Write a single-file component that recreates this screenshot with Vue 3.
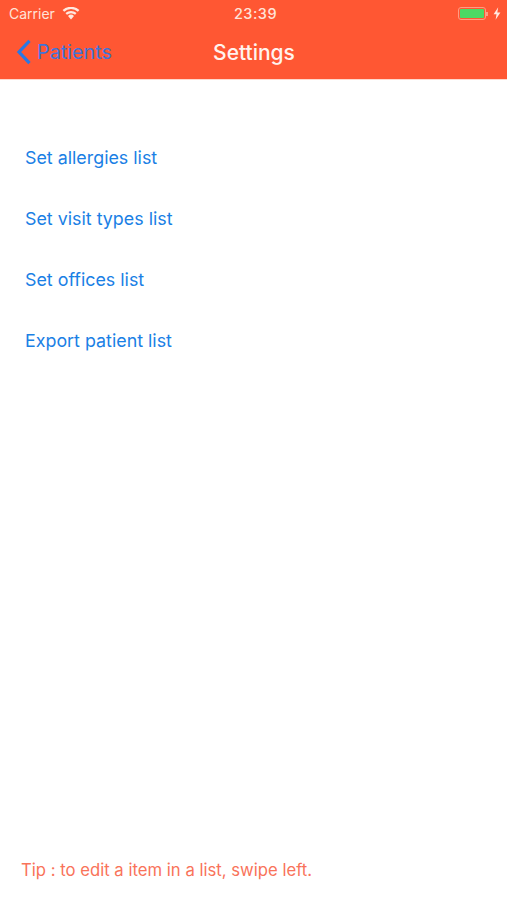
<script setup>
const items = ['Set allergies list', 'Set visit types list', 'Set offices list', 'Export patient list']
</script>

<template>
  <div class="screen">
    <header class="top">
      <div class="status">
        <div class="status-left">
          <span class="carrier">Carrier</span>
          <svg class="wifi" width="18" height="13" viewBox="0 0 18 13">
            <path d="M9 12.4 L6 9 A4.4 4.4 0 0 1 12 9 Z" fill="#ffe9e0"/>
            <path d="M4.2 6.9 A7.2 7.2 0 0 1 13.8 6.9" fill="none" stroke="#ffe9e0" stroke-width="2.3"/>
            <path d="M1.4 3.9 A11.2 11.2 0 0 1 16.6 3.9" fill="none" stroke="#ffe9e0" stroke-width="2.3"/>
          </svg>
        </div>
        <span class="time">23:39</span>
        <div class="status-right">
          <span class="battery"><span class="level"></span></span>
          <span class="nub"></span>
          <svg class="bolt" width="8" height="13" viewBox="0 0 8 13">
            <path d="M5.2 0.3 L0.6 7.2 H3.5 L2.6 12.7 L7.4 5.4 H4.3 Z" fill="#ffe9e0"/>
          </svg>
        </div>
      </div>
      <nav class="nav">
        <div class="back">
          <svg width="16" height="26" viewBox="0 0 16 26">
            <path d="M13.5 1.8 L3 13 L13.5 24.2" fill="none" stroke="#2a78e4" stroke-width="3.2"/>
          </svg>
          <span class="back-label">Patients</span>
        </div>
        <h1 class="title">Settings</h1>
      </nav>
    </header>
    <main class="content">
      <ul class="list">
        <li v-for="item in items" :key="item" class="row">{{ item }}</li>
      </ul>
      <p class="tip">Tip : to edit a item in a list, swipe left.</p>
    </main>
  </div>
</template>

<style scoped>
.screen {
  width: 507px;
  height: 900px;
  display: flex;
  flex-direction: column;
  background: #fff;
  overflow: hidden;
  font-family: Inter, "Liberation Sans", sans-serif;
}
.top {
  flex: none;
  height: 80px;
  box-sizing: border-box;
  background: #ff5733;
  border-bottom: 1px solid #ffd8cc;
  margin-bottom: -1px;
}
.status {
  height: 27px;
  display: grid;
  grid-template-columns: 1fr auto 1fr;
  align-items: center;
  padding: 0 6px 0 9px;
  color: #ffe3d8;
}
.status-left { display: flex; align-items: center; gap: 7px; }
.carrier { font-size: 14px; }
.wifi { margin-top: -1px; }
.time { font-size: 14.5px; font-weight: 500; letter-spacing: 0.5px; margin-left: 1px; }
.status-right { display: flex; align-items: center; justify-content: flex-end; }
.battery {
  width: 28px;
  height: 13px;
  box-sizing: border-box;
  border: 1px solid #ff9c84;
  border-radius: 3px;
  padding: 1px;
  display: flex;
}
.level { flex: 1; background: #4cd964; border-radius: 1px; }
.nub { width: 2px; height: 4px; background: #ff9c84; margin-right: 5px; }
.nav {
  height: 51px;
  position: relative;
  display: flex;
  align-items: center;
  justify-content: center;
}
.back {
  position: absolute;
  left: 16px;
  top: 12px;
  display: flex;
  align-items: center;
  gap: 5px;
}
.back-label { font-size: 19.8px; color: #3f74d8; }
.title { margin: 0 0 0 1px; font-size: 21px; font-weight: 500; color: #fff3ee; }
.content {
  flex: 1;
  display: flex;
  flex-direction: column;
  justify-content: space-between;
}
.list {
  list-style: none;
  margin: 0;
  padding: 48px 0 0 25px;
}
.row {
  height: 61px;
  line-height: 61px;
  font-size: 17.85px;
  color: #1a80e5;
}
.tip {
  margin: 0 0 19px 21px;
  line-height: 22px;
  font-size: 16.7px;
  color: #f9735a;
}
</style>

<style>
body { margin: 0; }
</style>
